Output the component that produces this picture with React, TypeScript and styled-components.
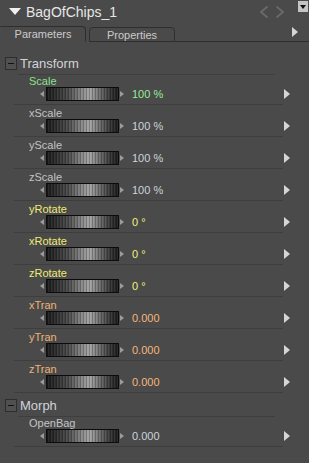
import * as React from "react";
import styled, { createGlobalStyle } from "styled-components";

const GlobalStyle = createGlobalStyle`
  html, body {
    margin: 0;
    padding: 0;
    background: #4a4a4a;
  }
  body {
    font-family: "Liberation Sans", Arial, sans-serif;
  }
`;

const tones = {
  green: { label: "#8be08b", value: "#96ec96" },
  plain: { label: "#c4c4c4", value: "#cdd3da" },
  yellow: { label: "#ecec74", value: "#f0f07a" },
  orange: { label: "#eeb274", value: "#f2b67a" },
};

type Tone = keyof typeof tones;

type Param = {
  name: string;
  value: string;
  tone: Tone;
};

const transform: Param[] = [
  { name: "Scale", value: "100 %", tone: "green" },
  { name: "xScale", value: "100 %", tone: "plain" },
  { name: "yScale", value: "100 %", tone: "plain" },
  { name: "zScale", value: "100 %", tone: "plain" },
  { name: "yRotate", value: "0 °", tone: "yellow" },
  { name: "xRotate", value: "0 °", tone: "yellow" },
  { name: "zRotate", value: "0 °", tone: "yellow" },
  { name: "xTran", value: "0.000", tone: "orange" },
  { name: "yTran", value: "0.000", tone: "orange" },
  { name: "zTran", value: "0.000", tone: "orange" },
];

const morph: Param[] = [{ name: "OpenBag", value: "0.000", tone: "plain" }];

const Panel = styled.div`
  width: 309px;
  height: 463px;
  background: #4a4a4a;
  overflow: hidden;
  user-select: none;
`;

const Header = styled.div`
  height: 26px;
  display: flex;
  align-items: flex-start;
  position: relative;
`;

const Collapse = styled.div`
  width: 0;
  height: 0;
  margin: 8px 0 0 9px;
  border-left: 6px solid transparent;
  border-right: 6px solid transparent;
  border-top: 7px solid #f0f0f0;
`;

const Title = styled.div`
  margin: 4px 0 0 5px;
  font-size: 14px;
  line-height: 16px;
  color: #e6e6e6;
`;

const Nav = styled.div`
  margin: 5px 0 0 auto;
  display: flex;
  gap: 6px;
`;

const MenuButton = styled.div`
  width: 10px;
  height: 11px;
  margin: 1px 1px 0 13px;
  background: #c4c4c4;
  display: flex;
  align-items: center;
  justify-content: center;
  &::after {
    content: "";
    border-left: 3px solid transparent;
    border-right: 3px solid transparent;
    border-top: 4px solid #111;
  }
`;

const TabBar = styled.div`
  height: 16px;
  display: flex;
  align-items: flex-end;
  position: relative;
`;

const Tab = styled.div<{ $active?: boolean }>`
  width: ${(p) => (p.$active ? 86 : 86)}px;
  height: ${(p) => (p.$active ? 16 : 15)}px;
  box-sizing: border-box;
  margin-left: ${(p) => (p.$active ? 0 : 3)}px;
  border: 1px solid #2e2e2e;
  border-left-color: ${(p) => (p.$active ? "transparent" : "#2e2e2e")};
  border-bottom: ${(p) => (p.$active ? "1px solid #4a4a4a" : "1px solid #2e2e2e")};
  border-radius: ${(p) => (p.$active ? "0 4px 0 0" : "4px 4px 0 0")};
  font-size: 11px;
  line-height: 14px;
  color: #cacaca;
  text-align: center;
`;

const TabRest = styled.div`
  flex: 1;
  height: 16px;
  box-sizing: border-box;
  border-bottom: 1px solid #2e2e2e;
  display: flex;
  justify-content: flex-end;
  align-items: flex-start;
  padding: 1px 11px 0 0;
`;

const PlayArrow = styled.div<{ $size?: number }>`
  width: 0;
  height: 0;
  border-top: ${(p) => p.$size ?? 5}px solid transparent;
  border-bottom: ${(p) => p.$size ?? 5}px solid transparent;
  border-left: ${(p) => (p.$size ?? 5) + 1}px solid #d6d6d6;
`;

const Content = styled.div`
  padding-top: 11px;
`;

const Group = styled.div`
  display: flex;
  flex-direction: column;
`;

const GroupHead = styled.div`
  display: flex;
  padding: 2px 0 0 5px;
  margin-top: 2px;
`;

const MinusBox = styled.div`
  width: 12px;
  height: 13px;
  box-sizing: border-box;
  border: 1px solid #2e2e2e;
  background: #505050;
  display: flex;
  align-items: center;
  justify-content: center;
  &::after {
    content: "";
    width: 6px;
    height: 1px;
    background: #111;
  }
`;

const GroupTitle = styled.div`
  width: 257px;
  height: 18px;
  margin-left: 1px;
  box-sizing: border-box;
  border-bottom: 1px solid #3e3e3e;
  padding-left: 2px;
  font-size: 13px;
  line-height: 14px;
  color: #d0d4da;
`;

const Row = styled.div`
  display: flex;
  flex-direction: column;
  margin: 0 19px 0 14px;
`;

const Label = styled.div<{ $tone: Tone }>`
  height: 12px;
  padding-left: 15px;
  font-size: 11px;
  line-height: 12px;
  color: ${(p) => tones[p.$tone].label};
`;

const SliderLine = styled.div`
  height: 14px;
  display: flex;
  align-items: center;
  padding-left: 26px;
`;

const Nudge = styled.div<{ $dir: "left" | "right" }>`
  width: 0;
  height: 0;
  border-top: 3px solid transparent;
  border-bottom: 3px solid transparent;
  ${(p) =>
    p.$dir === "left"
      ? "border-right: 4px solid #9c9c9c; margin-right: 2px;"
      : "border-left: 4px solid #9c9c9c; margin-left: 1px;"}
`;

const Dial = styled.div`
  width: 73px;
  height: 14px;
  box-sizing: border-box;
  border: 1px solid #0c0c0c;
  background: repeating-linear-gradient(
      90deg,
      rgba(0, 0, 0, 0.22) 0 1px,
      rgba(255, 255, 255, 0.06) 1px 2px,
      transparent 2px 3px
    ),
    linear-gradient(
      90deg,
      #1c1c1c 0%,
      #2a2a2a 10%,
      #4c4c4c 30%,
      #8a8a8a 50%,
      #a4a4a4 60%,
      #6a6a6a 75%,
      #333 90%,
      #1e1e1e 100%
    );
`;

const Value = styled.div<{ $tone: Tone }>`
  margin-left: 8px;
  font-size: 11px;
  line-height: 14px;
  color: ${(p) => tones[p.$tone].value};
`;

const Spacer = styled.div`
  flex: 1;
`;

const Divider = styled.div`
  height: 1px;
  margin: 3px 7px 2px 0;
  background: #3e3e3e;
`;

function ParamRow({ p }: { p: Param }) {
  return (
    <Row>
      <Label $tone={p.tone}>{p.name}</Label>
      <SliderLine>
        <Nudge $dir="left" />
        <Dial />
        <Nudge $dir="right" />
        <Value $tone={p.tone}>{p.value}</Value>
        <Spacer />
        <PlayArrow />
      </SliderLine>
      <Divider />
    </Row>
  );
}

function ParamGroup({ title, params }: { title: string; params: Param[] }) {
  return (
    <Group>
      <GroupHead>
        <MinusBox />
        <GroupTitle>{title}</GroupTitle>
      </GroupHead>
      {params.map((p) => (
        <ParamRow key={p.name} p={p} />
      ))}
    </Group>
  );
}

export default function App() {
  return (
    <Panel>
      <GlobalStyle />
      <Header>
        <Collapse />
        <Title>BagOfChips_1</Title>
        <Nav>
          <svg width="10" height="14" viewBox="0 0 10 14">
            <path d="M8.5 1.5 L2 7 L8.5 12.5" fill="none" stroke="#6a6a6a" strokeWidth="1.8" />
          </svg>
          <svg width="10" height="14" viewBox="0 0 10 14">
            <path d="M1.5 1.5 L8 7 L1.5 12.5" fill="none" stroke="#6a6a6a" strokeWidth="1.8" />
          </svg>
        </Nav>
        <MenuButton />
      </Header>
      <TabBar>
        <Tab $active>Parameters</Tab>
        <Tab>Properties</Tab>
        <TabRest>
          <PlayArrow />
        </TabRest>
      </TabBar>
      <Content>
        <ParamGroup title="Transform" params={transform} />
        <ParamGroup title="Morph" params={morph} />
      </Content>
    </Panel>
  );
}
